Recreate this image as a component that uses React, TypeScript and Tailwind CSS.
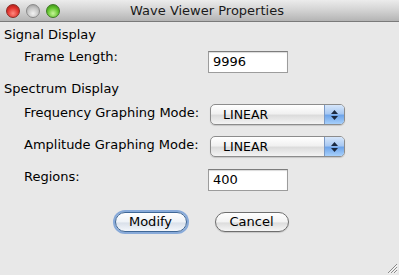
import React from "react";

const font = { fontFamily: '"DejaVu Sans", "Liberation Sans", sans-serif' };

function Light({ color }: { color: "red" | "gray" | "green" }) {
  const bg =
    color === "red"
      ? "bg-[radial-gradient(circle_at_50%_70%,#ff8a80_0%,#e0302a_55%,#9c1a14_100%)] border-[#8a2a24]"
      : color === "green"
      ? "bg-[radial-gradient(circle_at_50%_70%,#c8f59a_0%,#5fc22a_55%,#2f7d12_100%)] border-[#3e7a25]"
      : "bg-[radial-gradient(circle_at_50%_70%,#f2f2f2_0%,#c4c4c4_55%,#8f8f8f_100%)] border-[#8a8a8a]";
  return <div className={`h-[14px] w-[14px] rounded-full border ${bg}`} />;
}

function TextField({ value }: { value: string }) {
  return (
    <div className="h-[22px] w-[80px] border border-[#9c9c9c] border-t-[#7d7d7d] bg-white pl-[4px] text-[13px] leading-[20px] text-black shadow-[inset_0_1px_1px_rgba(0,0,0,0.15)]">
      {value}
    </div>
  );
}

function Select({ value }: { value: string }) {
  return (
    <div className="flex h-[21px] w-[135px] overflow-hidden rounded-[5px] border border-[#8c8c8c] bg-[linear-gradient(#ffffff,#f1f1f1_45%,#dcdcdc_55%,#f4f4f4)] shadow-[0_1px_1px_rgba(0,0,0,0.15)]">
      <div className="flex-1 pl-[12px] text-[12.5px] leading-[19px] text-black">{value}</div>
      <div className="flex w-[20px] flex-col items-center justify-center gap-[2px] border-l border-[#7b99c4] bg-[linear-gradient(#d6e6fa,#a9c9f2_45%,#6fa5ea_55%,#a7d0fb)]">
        <svg width="7" height="4" viewBox="0 0 7 4"><path d="M3.5 0L7 4H0z" fill="#1c2a40" /></svg>
        <svg width="7" height="4" viewBox="0 0 7 4"><path d="M0 0h7L3.5 4z" fill="#1c2a40" /></svg>
      </div>
    </div>
  );
}

export default function App() {
  return (
    <div className="relative h-[275px] w-[399px] overflow-hidden bg-[#e8e8e8] text-[13px] text-black" style={font}>
      {/* title bar */}
      <div className="relative flex h-[22px] items-center border-b border-[#7a7a7a] bg-[linear-gradient(#ececec,#d2d2d2_50%,#b4b4b4)]">
        <div className="flex gap-[6px] pl-[6px]">
          <Light color="red" />
          <Light color="gray" />
          <Light color="green" />
        </div>
        <div className="absolute inset-0 flex items-center justify-center pl-[15px] text-[13px] text-[#1a1a1a]">
          Wave Viewer Properties
        </div>
      </div>

      <div className="flex flex-col pl-[4px]">
        <div className="mt-[5px] leading-[16px]">Signal Display</div>

        <div className="mt-[6px] flex items-start">
          <div className="w-[204px] pl-[20px] leading-[16px]">Frame Length:</div>
          <div className="mt-[2px]"><TextField value="9996" /></div>
        </div>

        <div className="mt-[8px] leading-[16px]">Spectrum Display</div>

        <div className="mt-[7px] flex items-start">
          <div className="w-[206px] pl-[20px] pt-[1px] leading-[16px]">Frequency Graphing Mode:</div>
          <Select value="LINEAR" />
        </div>

        <div className="mt-[11px] flex items-start">
          <div className="w-[206px] pl-[20px] pt-[1px] leading-[16px]">Amplitude Graphing Mode:</div>
          <Select value="LINEAR" />
        </div>

        <div className="mt-[12px] flex items-start">
          <div className="w-[204px] pl-[20px] leading-[16px]">Regions:</div>
          <TextField value="400" />
        </div>

        <div className="mt-[21px] flex items-center justify-center gap-[28px]">
          <button className="h-[20px] w-[72px] rounded-full border border-[#3f6796] bg-[linear-gradient(#ffffff,#eef2f7_50%,#d9e0ea_55%,#f4f7fb)] text-[13px] leading-[18px] shadow-[0_0_0_2px_rgba(104,150,212,0.75)]">
            Modify
          </button>
          <button className="h-[20px] w-[74px] rounded-full border border-[#6e6e6e] bg-[linear-gradient(#ffffff,#f2f2f2_50%,#dcdcdc_55%,#f6f6f6)] text-[13px] leading-[18px] shadow-[0_1px_1px_rgba(0,0,0,0.15)]">
            Cancel
          </button>
        </div>
      </div>

      {/* resize grip */}
      <svg className="absolute bottom-[1px] right-[1px]" width="11" height="11" viewBox="0 0 11 11">
        <path d="M1 10L10 1M4 10L10 4M7 10L10 7" stroke="#8a8a8a" strokeWidth="1" />
        <path d="M2 10.5L10.5 2M5 10.5L10.5 5M8 10.5L10.5 8" stroke="#ffffff" strokeWidth="0.8" />
      </svg>
    </div>
  );
}
